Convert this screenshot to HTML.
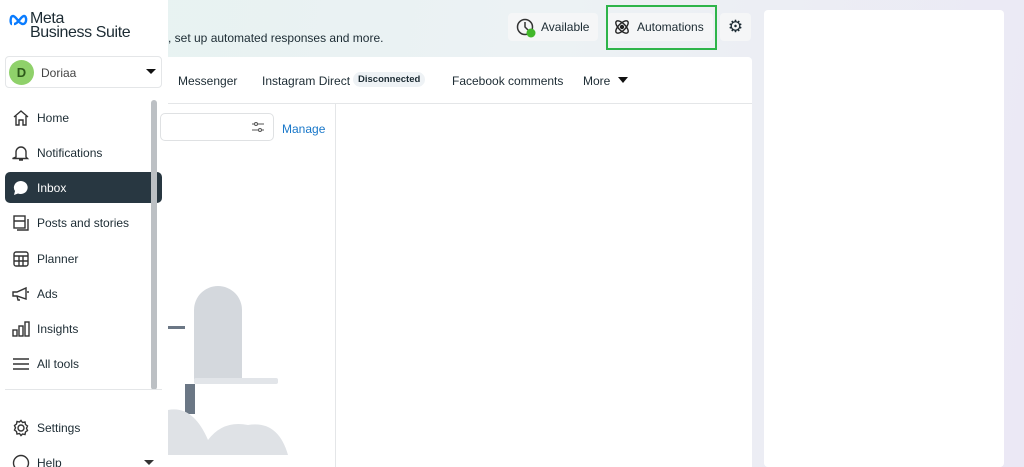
<!DOCTYPE html>
<html><head><style>
*{margin:0;padding:0;box-sizing:border-box}
html,body{width:1024px;height:467px;overflow:hidden}
body{position:relative;font-family:"Liberation Sans",sans-serif;background:linear-gradient(100deg,#e6f3f1 0%,#ecf2f4 50%,#ebe8f5 100%);color:#1c2b33}
.abs{position:absolute}
.side{left:0;top:0;width:168px;height:467px;background:#fff}
.nav{position:absolute;left:5px;width:157px;height:31px;border-radius:5px;font-size:12px;display:flex;align-items:center;padding-left:32px;color:#1c2b33}
.nav svg{position:absolute;left:7px;top:7px}
.btn{background:#f5f6f7;border-radius:4px;font-size:12px;display:flex;align-items:center}
</style></head><body>
<div class="abs side">
 <svg class="abs" style="left:9px;top:14px" width="22" height="12" viewBox="0 0 22 12"><path d="M3 10C1 10 1 2 4 2c3 0 6 8 10 8 4 0 4-8 1-8-3 0-6 8-10 8" fill="none" stroke="#0a7cff" stroke-width="2.4"/></svg>
 <div class="abs" style="left:30px;top:12px;font-size:16px;line-height:14px;color:#1c2b33;letter-spacing:-.4px">Meta<br>Business Suite</div>
 <div class="abs" style="left:5px;top:56px;width:157px;height:32px;border:1px solid #e4e6e8;border-radius:4px"></div>
 <div class="abs" style="left:9px;top:60px;width:25px;height:25px;border-radius:50%;background:#8fd16a;color:#2d5a1a;font-weight:bold;font-size:13px;text-align:center;line-height:25px">D</div>
 <div class="abs" style="left:41px;top:66px;font-size:12px;color:#444">Doriaa</div>
 <div class="abs" style="left:146px;top:69px;border:5px solid transparent;border-top:5px solid #111;border-bottom:0"></div>
 <div class="nav" style="top:102px"><svg width="18" height="18" viewBox="0 0 18 18" fill="none" stroke="#333" stroke-width="1.4"><path d="M2 8L9 2l7 6M4 7v9h3v-5h4v5h3V7"/></svg>Home</div>
 <div class="nav" style="top:137px"><svg width="18" height="18" viewBox="0 0 18 18" fill="none" stroke="#333" stroke-width="1.4"><path d="M4 13V8a5 5 0 0110 0v5l1.5 1.5h-15zM7 16h4"/></svg>Notifications</div>
 <div class="nav" style="top:172px;background:#283741;color:#fff"><svg width="18" height="18" viewBox="0 0 18 18"><path d="M9 2a7 6.5 0 00-6 10l-1 4 4-1.5A7 6.5 0 109 2z" fill="#fff"/></svg>Inbox</div>
 <div class="nav" style="top:207px"><svg width="18" height="18" viewBox="0 0 18 18" fill="none" stroke="#333" stroke-width="1.4"><rect x="2" y="2" width="11" height="12"/><path d="M2 7h11M5 16h11V5"/></svg>Posts and stories</div>
 <div class="nav" style="top:243px"><svg width="18" height="18" viewBox="0 0 18 18" fill="none" stroke="#333" stroke-width="1.4"><rect x="2" y="2" width="14" height="14" rx="2"/><path d="M2 6h14M2 11h14M7 6v10M11 6v10"/></svg>Planner</div>
 <div class="nav" style="top:278px"><svg width="18" height="18" viewBox="0 0 18 18" fill="none" stroke="#333" stroke-width="1.4"><path d="M1 7h4l9-4v11L5 11H1zM5 11l1 4h2M15 7h2"/></svg>Ads</div>
 <div class="nav" style="top:313px"><svg width="18" height="18" viewBox="0 0 18 18" fill="none" stroke="#333" stroke-width="1.4"><rect x="1" y="10" width="4" height="6"/><rect x="7" y="6" width="4" height="10"/><rect x="13" y="2" width="4" height="14"/></svg>Insights</div>
 <div class="nav" style="top:348px"><svg width="18" height="18" viewBox="0 0 18 18" fill="none" stroke="#333" stroke-width="1.4"><path d="M1 4h16M1 9h16M1 14h16"/></svg>All tools</div>
 <div class="abs" style="left:151px;top:100px;width:6px;height:290px;border-radius:3px;background:#bcc0c4"></div>
 <div class="abs" style="left:5px;top:389px;width:157px;height:1px;background:#e4e6e8"></div>
 <div class="nav" style="top:412px"><svg width="18" height="18" viewBox="0 0 18 18" fill="none" stroke="#333" stroke-width="1.4"><circle cx="9" cy="9" r="3"/><path d="M9 1.5l1.5 2 2.5-.5.5 2.5 2 1.5-1 2.3 1 2.2-2 1.5-.5 2.5-2.5-.5L9 16.5l-1.5-2-2.5.5-.5-2.5-2-1.5 1-2.2-1-2.3 2-1.5.5-2.5 2.5.5z"/></svg>Settings</div>
 <div class="nav" style="top:447px"><svg width="18" height="18" viewBox="0 0 18 18" fill="none" stroke="#333" stroke-width="1.4"><circle cx="9" cy="9" r="7.5"/></svg>Help</div>
 <div class="abs" style="left:144px;top:460px;border:5px solid transparent;border-top:5px solid #333;border-bottom:0"></div>
</div>
<div class="abs" style="left:168px;top:31px;font-size:12px;color:#1c2b33">, set up automated responses and more.</div>
<div class="abs btn" style="left:508px;top:13px;width:90px;height:28px;padding-left:33px">Available</div>
<svg class="abs" style="left:516px;top:18px" width="22" height="22" viewBox="0 0 22 22"><circle cx="9" cy="9" r="7.5" fill="none" stroke="#333" stroke-width="1.5"/><path d="M9 4v5l3 3" fill="none" stroke="#333" stroke-width="1.5"/><circle cx="15" cy="15" r="4.5" fill="#42b72a"/></svg>
<div class="abs btn" style="left:607px;top:13px;width:106px;height:28px;padding-left:30px">Automations</div>
<div class="abs" style="left:606px;top:5px;width:111px;height:45px;border:2px solid #2db44a"></div>
<svg class="abs" style="left:613px;top:18px" width="18" height="18" viewBox="0 0 18 18" fill="none" stroke="#222" stroke-width="1.4"><ellipse cx="9" cy="9" rx="8" ry="3.5" transform="rotate(45 9 9)"/><ellipse cx="9" cy="9" rx="8" ry="3.5" transform="rotate(-45 9 9)"/><circle cx="9" cy="9" r="1.5" fill="#222"/></svg>
<div class="abs btn" style="left:720px;top:13px;width:31px;height:28px;justify-content:center;font-size:17px">⚙</div>
<div class="abs" style="left:168px;top:57px;width:584px;height:410px;background:#fff;border-radius:0 4px 0 0"></div>
<div class="abs" style="left:764px;top:10px;width:240px;height:457px;background:#fff;border-radius:4px"></div>
<div class="abs" style="left:178px;top:74px;font-size:12px">Messenger</div>
<div class="abs" style="left:262px;top:74px;font-size:12px">Instagram Direct</div>
<div class="abs" style="left:353px;top:72px;font-size:9.5px;font-weight:bold;background:#eef2f5;border-radius:8px;padding:2px 5px">Disconnected</div>
<div class="abs" style="left:452px;top:74px;font-size:12px">Facebook comments</div>
<div class="abs" style="left:583px;top:74px;font-size:12px">More</div>
<div class="abs" style="left:618px;top:77px;border:5px solid transparent;border-top:6px solid #111;border-bottom:0"></div>
<div class="abs" style="left:168px;top:103px;width:584px;height:1px;background:#e4e6e8"></div>
<div class="abs" style="left:335px;top:104px;width:1px;height:363px;background:#e4e6e8"></div>
<div class="abs" style="left:160px;top:113px;width:114px;height:28px;border:1px solid #dfe1e3;border-radius:5px"></div>
<svg class="abs" style="left:251px;top:120px" width="14" height="14" viewBox="0 0 14 14" fill="none" stroke="#555" stroke-width="1"><path d="M1 4h12M1 10h12"/><circle cx="5" cy="4" r="1.5" fill="#fff"/><circle cx="9" cy="10" r="1.5" fill="#fff"/></svg>
<div class="abs" style="left:282px;top:122px;font-size:12px;color:#1877c9">Manage</div>
<svg class="abs" style="left:168px;top:270px" width="130" height="197" viewBox="0 0 130 197"><path d="M26 100V40a24 24 0 0148 0v70H26z" fill="#d4d8dd"/><rect x="26" y="108" width="84" height="6" rx="2" fill="#e2e5e9"/><rect x="0" y="56" width="17" height="3" fill="#6b7785"/><rect x="17" y="114" width="10" height="30" fill="#6b7785"/><path d="M0 140q25 -5 40 30q15-20 40-15q30-5 40 30H0z" fill="#dfe2e6"/></svg>
</body></html>
